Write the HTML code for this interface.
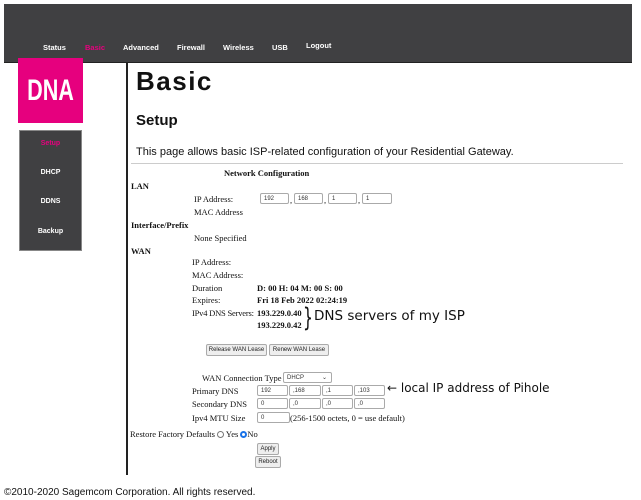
<!DOCTYPE html>
<html><head><meta charset="utf-8"><style>
*{margin:0;padding:0;box-sizing:border-box}
body{width:641px;height:500px;background:#fff;position:relative;overflow:hidden;font-family:"Liberation Serif",serif;font-size:8.5px;color:#111}
.a{position:absolute;white-space:nowrap}
.s{font-family:"Liberation Sans",sans-serif}
.nav{font-family:"Liberation Sans",sans-serif;font-weight:bold;font-size:7.5px;color:#fff;position:absolute;top:43px}
.in{position:absolute;height:11px;border:1px solid #aaa;border-radius:2px;font-family:"Liberation Sans",sans-serif;font-size:6px;padding:2px 0 0 3px;line-height:7px;color:#333}
.btn{position:absolute;height:12px;border:1px solid #aaa;border-radius:2px;background:#eee;font-family:"Liberation Sans",sans-serif;font-size:6px;padding-top:2px;line-height:7px;text-align:center;color:#222}
.sb{position:absolute;left:19px;width:63px;text-align:center;font-family:"Liberation Sans",sans-serif;font-weight:bold;font-size:7px;color:#fff}
</style></head><body>
<div class="a" style="left:4px;top:4px;width:628px;height:59px;background:#404042;border-bottom:1px solid #222"></div>
<span class="nav" style="left:43px">Status</span>
<span class="nav" style="left:85px;color:#e6007e">Basic</span>
<span class="nav" style="left:123px">Advanced</span>
<span class="nav" style="left:177px">Firewall</span>
<span class="nav" style="left:223px">Wireless</span>
<span class="nav" style="left:272px">USB</span>
<span class="nav" style="left:306px;top:41px">Logout</span>
<div class="a" style="left:126px;top:63px;width:2px;height:412px;background:#222"></div>
<div class="a" style="left:18px;top:58px;width:65px;height:65px;background:#e6007e"></div>
<div class="a" style="left:18px;top:58px;width:65px;height:65px;color:#fff;font-family:'Liberation Sans',sans-serif;font-weight:bold;font-size:30px;line-height:65px;text-align:center"><span style="display:inline-block;transform:scaleX(0.72)">DNA</span></div>
<div class="a" style="left:19px;top:130px;width:63px;height:121px;background:#404042;border:1px solid #888"></div>
<div class="sb" style="top:140px;color:#e6007e">Setup</div>
<div class="sb" style="top:169px">DHCP</div>
<div class="sb" style="top:198px">DDNS</div>
<div class="sb" style="top:228px">Backup</div>
<div class="a s" style="left:136px;top:66px;font-size:26px;font-weight:bold;letter-spacing:1.5px">Basic</div>
<div class="a s" style="left:136px;top:112px;font-size:15px;font-weight:bold">Setup</div>
<div class="a s" style="left:136px;top:146px;font-size:11px">This page allows basic ISP-related configuration of your Residential Gateway.</div>
<div class="a" style="left:131px;top:163px;width:492px;height:1px;background:#ccc"></div>
<div class="a" style="left:224px;top:168px;font-weight:bold">Network Configuration</div>
<div class="a" style="left:131px;top:181px;font-weight:bold">LAN</div>
<div class="a" style="left:194px;top:194px">IP Address:</div>
<div class="in" style="left:260px;top:193px;width:29px">192</div><span class="a" style="left:290px;top:195px">,</span>
<div class="in" style="left:294px;top:193px;width:29px">168</div><span class="a" style="left:324px;top:195px">,</span>
<div class="in" style="left:328px;top:193px;width:29px">1</div><span class="a" style="left:358px;top:195px">,</span>
<div class="in" style="left:362px;top:193px;width:30px">1</div>
<div class="a" style="left:194px;top:207px">MAC Address</div>
<div class="a" style="left:131px;top:220px;font-weight:bold">Interface/Prefix</div>
<div class="a" style="left:194px;top:233px">None Specified</div>
<div class="a" style="left:131px;top:246px;font-weight:bold">WAN</div>
<div class="a" style="left:192px;top:257px">IP Address:</div>
<div class="a" style="left:192px;top:270px">MAC Address:</div>
<div class="a" style="left:192px;top:283px">Duration</div>
<div class="a" style="left:257px;top:283px;font-weight:bold">D: 00 H: 04 M: 00 S: 00</div>
<div class="a" style="left:192px;top:295px">Expires:</div>
<div class="a" style="left:257px;top:295px;font-weight:bold">Fri 18 Feb 2022 02:24:19</div>
<div class="a" style="left:192px;top:308px;letter-spacing:-0.2px">IPv4 DNS Servers:</div>
<div class="a" style="left:257px;top:308px;font-weight:bold">193.229.0.40</div>
<div class="a" style="left:257px;top:320px;font-weight:bold">193.229.0.42</div>
<div class="a" style="left:303px;top:305px;font-family:'DejaVu Sans',sans-serif;font-size:26px;line-height:26px;transform:scaleX(0.6);transform-origin:left">}</div>
<div class="a" style="left:314px;top:308px;font-family:'DejaVu Sans',sans-serif;font-size:13.5px">DNS servers of my ISP</div>
<div class="btn" style="left:206px;top:344px;width:61px">Release WAN Lease</div>
<div class="btn" style="left:269px;top:344px;width:60px">Renew WAN Lease</div>
<div class="a" style="left:202px;top:373px">WAN Connection Type</div>
<div class="in" style="left:283px;top:372px;width:49px">DHCP<span style="position:absolute;right:4px">⌄</span></div>
<div class="a" style="left:192px;top:386px">Primary DNS</div>
<div class="a" style="left:192px;top:399px">Secondary DNS</div>
<div class="a" style="left:192px;top:413px">Ipv4 MTU Size</div>
<div class="in" style="left:257px;top:385px;width:31px">192</div>
<div class="in" style="left:289px;top:385px;width:32px">,168</div>
<div class="in" style="left:322px;top:385px;width:31px">,1</div>
<div class="in" style="left:354px;top:385px;width:31px">,103</div>
<div class="a" style="left:387px;top:381px;font-family:'DejaVu Sans',sans-serif;font-size:12px">← local IP address of Pihole</div>
<div class="in" style="left:257px;top:398px;width:31px">0</div>
<div class="in" style="left:289px;top:398px;width:32px">,0</div>
<div class="in" style="left:322px;top:398px;width:31px">,0</div>
<div class="in" style="left:354px;top:398px;width:31px">,0</div>
<div class="in" style="left:257px;top:412px;width:33px">0</div>
<div class="a" style="left:290px;top:413px">(256-1500 octets, 0 = use default)</div>
<div class="a" style="left:130px;top:429px">Restore Factory Defaults <span style="display:inline-block;width:7px;height:7px;border:1px solid #777;border-radius:50%;vertical-align:-1px"></span> Yes <span style="display:inline-block;width:7px;height:7px;border:2px solid #1a73e8;border-radius:50%;vertical-align:-1px"></span>No</div>
<div class="btn" style="left:257px;top:443px;width:22px">Apply</div>
<div class="btn" style="left:255px;top:456px;width:26px">Reboot</div>
<div class="a s" style="left:4px;top:487px;font-size:10px">©2010-2020 Sagemcom Corporation. All rights reserved.</div>
</body></html>
